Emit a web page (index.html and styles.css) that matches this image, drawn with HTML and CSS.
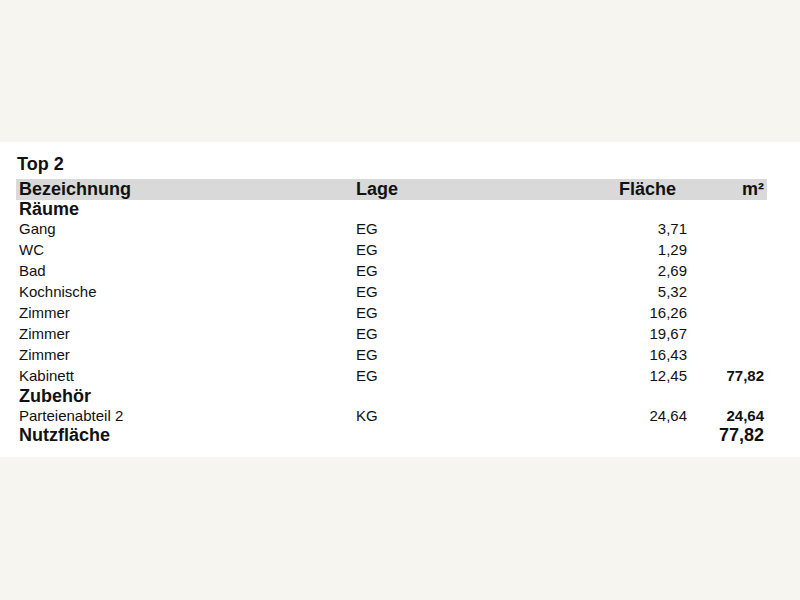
FILE: index.html
```html
<!DOCTYPE html>
<html lang="de">
<head>
<meta charset="utf-8">
<title>Top 2</title>
<link rel="stylesheet" href="styles.css">
</head>
<body>
<div class="page">
  <div class="panel">
    <div class="title">Top 2</div>
    <div class="table">
      <div class="row head">
        <div class="c-name">Bezeichnung</div>
        <div class="c-lage">Lage</div>
        <div class="c-fl">Fläche</div>
        <div class="c-m2">m²</div>
      </div>
      <div class="row group"><div class="c-name">Räume</div></div>
      <div class="row item"><div class="c-name">Gang</div><div class="c-lage">EG</div><div class="c-fl">3,71</div><div class="c-m2"></div></div>
      <div class="row item"><div class="c-name">WC</div><div class="c-lage">EG</div><div class="c-fl">1,29</div><div class="c-m2"></div></div>
      <div class="row item"><div class="c-name">Bad</div><div class="c-lage">EG</div><div class="c-fl">2,69</div><div class="c-m2"></div></div>
      <div class="row item"><div class="c-name">Kochnische</div><div class="c-lage">EG</div><div class="c-fl">5,32</div><div class="c-m2"></div></div>
      <div class="row item"><div class="c-name">Zimmer</div><div class="c-lage">EG</div><div class="c-fl">16,26</div><div class="c-m2"></div></div>
      <div class="row item"><div class="c-name">Zimmer</div><div class="c-lage">EG</div><div class="c-fl">19,67</div><div class="c-m2"></div></div>
      <div class="row item"><div class="c-name">Zimmer</div><div class="c-lage">EG</div><div class="c-fl">16,43</div><div class="c-m2"></div></div>
      <div class="row item"><div class="c-name">Kabinett</div><div class="c-lage">EG</div><div class="c-fl">12,45</div><div class="c-m2 sum">77,82</div></div>
      <div class="row group later"><div class="c-name">Zubehör</div></div>
      <div class="row item"><div class="c-name">Parteienabteil 2</div><div class="c-lage">KG</div><div class="c-fl">24,64</div><div class="c-m2 sum">24,64</div></div>
      <div class="row total"><div class="c-name">Nutzfläche</div><div class="c-lage"></div><div class="c-fl"></div><div class="c-m2">77,82</div></div>
    </div>
  </div>
</div>
</body>
</html>
```

FILE: styles.css
```css
html, body {
  margin: 0;
  padding: 0;
  background: #f7f5f0;
  font-family: "Liberation Sans", Arial, sans-serif;
  color: #111;
}
.page {
  width: 800px;
  height: 600px;
  padding-top: 142px;
  box-sizing: border-box;
}
.panel {
  background: #fff;
  height: 315px;
  box-sizing: border-box;
  padding-top: 12px;
}
.title {
  font-weight: bold;
  font-size: 18px;
  line-height: 21px;
  padding-left: 17px;
  margin-bottom: 4px;
}
.table {
  margin-left: 16px;
  width: 751px;
}
.row {
  display: grid;
  grid-template-columns: 340px 1fr 100px 77px;
  align-items: center;
}
.c-name { padding-left: 3px; white-space: nowrap; }
.c-fl { text-align: right; padding-right: 3px; }
.c-m2 { text-align: right; padding-right: 3px; }
.head {
  background: #d9d9d9;
  font-weight: bold;
  font-size: 18px;
  height: 21px;
  line-height: 21px;
}
.head .c-fl { padding-right: 14px; }
.group {
  font-weight: bold;
  font-size: 18px;
  height: 18px;
  line-height: 18px;
}
.group.later { margin-top: 1px; }
.item {
  font-size: 15px;
  height: 21px;
  line-height: 21px;
}
.item .sum { font-weight: bold; }
.total {
  font-weight: bold;
  font-size: 18px;
  height: 18px;
  line-height: 18px;
}
```
